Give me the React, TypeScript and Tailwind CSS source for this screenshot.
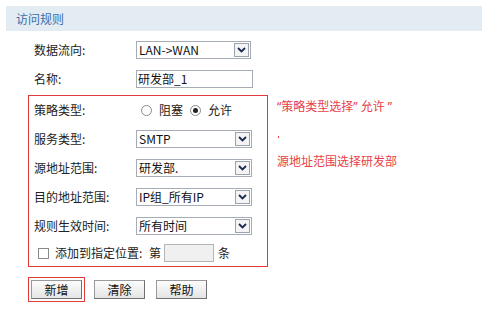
import React from "react";

const font = "font-['Noto_Sans_CJK_SC','Noto_Sans',sans-serif]";

function Chevron() {
  return (
    <svg width="9" height="6" viewBox="0 0 9 6" className="block">
      <path d="M1 1 L4.5 4.5 L8 1" fill="none" stroke="#1a2a50" strokeWidth="1.8" />
    </svg>
  );
}

function Select({ value, w = "w-[116px]" }: { value: string; w?: string }) {
  return (
    <div className={`flex h-[18px] ${w} items-center border border-[#a5acb5] bg-white`}>
      <span className="flex-1 whitespace-nowrap pl-[2px] text-[12px] leading-[16px] text-[#111]">{value}</span>
      <span className="mr-[1px] flex h-[14px] w-[15px] items-center justify-center border border-[#9aa3ae] bg-[#f4f4f4]">
        <Chevron />
      </span>
    </div>
  );
}

function Row({ label, children, h = "h-[29px]" }: { label: string; children: React.ReactNode; h?: string }) {
  return (
    <div className={`flex ${h} items-center`}>
      <span className="w-[102px] text-[12px] leading-[16px] text-[#222]">{label}</span>
      {children}
    </div>
  );
}

function Radio({ checked }: { checked?: boolean }) {
  return (
    <span className="flex h-[11px] w-[11px] items-center justify-center rounded-full border border-[#8a8a8a] bg-white">
      {checked && <span className="h-[5px] w-[5px] rounded-full bg-[#222]" />}
    </span>
  );
}

function Button({ text }: { text: string }) {
  return (
    <div className="flex h-[19px] w-[51px] items-center justify-center border border-[#9a9a9a] border-b-[#707070] border-r-[#707070] bg-gradient-to-b from-[#fdfdfd] to-[#e4e4e4] text-[12px] leading-[16px] text-[#111]">
      {text}
    </div>
  );
}

export default function App() {
  return (
    <div className={`h-[315px] w-[500px] bg-white ${font}`}>
      <div className="pl-[6px] pt-[6px]">
        <div className="flex h-[25px] w-[476px] items-center bg-[#e3ebf3] pl-[10px] text-[12px] text-[#3a6ea8]">
          访问规则
        </div>
      </div>

      <div className="mt-[4px] pl-[34px]">
        <Row label="数据流向:">
          <Select value="LAN->WAN" w="w-[115px]" />
        </Row>
        <Row label="名称:">
          <div className="flex h-[18px] w-[117px] items-center border border-[#a5acb5] bg-white pl-[1px] text-[12px] leading-[16px] text-[#111]">
            研发部_1
          </div>
        </Row>
      </div>

      <div className="mt-[2px] flex pl-[28px]">
        <div className="w-[240px] border border-[#e53a3a] pl-[5px]">
          <Row label="策略类型:" h="h-[28px]">
            <div className="ml-[5px] flex items-center text-[12px] leading-[16px] text-[#222]">
              <Radio />
              <span className="ml-[7px]">阻塞</span>
              <span className="ml-[7px]">
                <Radio checked />
              </span>
              <span className="ml-[7px]">允许</span>
            </div>
          </Row>
          <Row label="服务类型:">
            <Select value="SMTP" />
          </Row>
          <Row label="源地址范围:">
            <Select value="研发部." />
          </Row>
          <Row label="目的地址范围:">
            <Select value="IP组_所有IP" />
          </Row>
          <Row label="规则生效时间:">
            <Select value="所有时间" />
          </Row>
          <div className="flex h-[26px] items-center pl-[4px] text-[12px] leading-[16px] text-[#222]">
            <span className="h-[11px] w-[11px] border border-[#8a8a8a] bg-white" />
            <span className="ml-[6px] w-[94px]">添加到指定位置:</span>
            <span>第</span>
            <span className="ml-[3px] h-[18px] w-[50px] border border-[#b5b5b5] bg-[#f0f0f0]" />
            <span className="ml-[4px]">条</span>
          </div>
        </div>

        <div className="ml-[9px] flex flex-col pt-[5px] text-[12px] leading-[14px] text-[#e8404a]">
          <span className="font-['Noto_Sans','Noto_Sans_CJK_SC',sans-serif]">“策略类型选择” 允许 ”</span>
          <span className="ml-[1px] mt-[22px] h-[2px] w-[1px] bg-[#e8404a]" />
          <span className="mt-[16px]">源地址范围选择研发部</span>
        </div>
      </div>

      <div className="mt-[10px] flex items-center pl-[28px]">
        <div className="border border-[#e53a3a] p-[2px]">
          <Button text="新增" />
        </div>
        <div className="ml-[9px]">
          <Button text="清除" />
        </div>
        <div className="ml-[11px]">
          <Button text="帮助" />
        </div>
      </div>
    </div>
  );
}
